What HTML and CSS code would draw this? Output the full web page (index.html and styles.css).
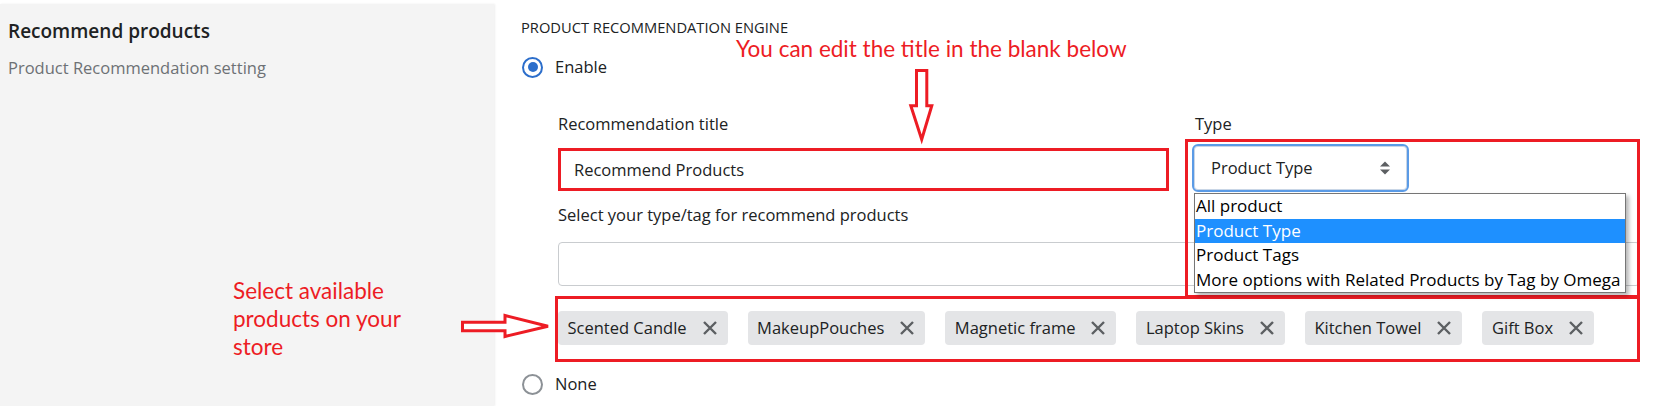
FILE: index.html
```html
<!DOCTYPE html>
<html lang="en">
<head>
    <meta charset="UTF-8">
    <meta name="viewport" content="width=device-width, initial-scale=1.0">
    <title>Recommend products</title>
    <link rel="stylesheet" href="styles.css">
</head>
<body>
    <div class="page">
        <div class="sidebar">
            <h2>Recommend products</h2>
            <p>Product Recommendation setting</p>
        </div>

        <div class="main">
            <h3 class="engine-title">Product recommendation engine</h3>
            <div class="radio-row">
                <span class="radio checked"></span>
                <span>Enable</span>
            </div>

            <div class="form">
                <div class="field-row">
                    <div class="title-field">
                        <div class="label">Recommendation title</div>
                        <div class="text-input">Recommend Products</div>
                    </div>
                    <div class="type-field">
                        <div class="label">Type</div>
                        <div class="type-box">
                            <div class="select">
                                <span>Product Type</span>
                                <svg width="10" height="14" viewBox="0 0 10 14">
                                    <polygon points="0,5.5 5,0.5 10,5.5" fill="#5c5f62"/>
                                    <polygon points="0,8.5 5,13.5 10,8.5" fill="#5c5f62"/>
                                </svg>
                            </div>
                            <ul class="options">
                                <li>All product</li>
                                <li class="active">Product Type</li>
                                <li>Product Tags</li>
                                <li>More options with Related Products by Tag by Omega</li>
                            </ul>
                        </div>
                    </div>
                </div>

                <div class="label tag-label">Select your type/tag for recommend products</div>
                <div class="tag-input"></div>

                <div class="tags-box">
                    <span class="chip">Scented Candle
                        <svg width="16" height="16" viewBox="0 0 16 16"><path d="M2 2L14 14M14 2L2 14"/></svg>
                    </span>
                    <span class="chip">MakeupPouches
                        <svg width="16" height="16" viewBox="0 0 16 16"><path d="M2 2L14 14M14 2L2 14"/></svg>
                    </span>
                    <span class="chip">Magnetic frame
                        <svg width="16" height="16" viewBox="0 0 16 16"><path d="M2 2L14 14M14 2L2 14"/></svg>
                    </span>
                    <span class="chip">Laptop Skins
                        <svg width="16" height="16" viewBox="0 0 16 16"><path d="M2 2L14 14M14 2L2 14"/></svg>
                    </span>
                    <span class="chip">Kitchen Towel
                        <svg width="16" height="16" viewBox="0 0 16 16"><path d="M2 2L14 14M14 2L2 14"/></svg>
                    </span>
                    <span class="chip">Gift Box
                        <svg width="16" height="16" viewBox="0 0 16 16"><path d="M2 2L14 14M14 2L2 14"/></svg>
                    </span>
                </div>
            </div>

            <div class="radio-row none-row">
                <span class="radio"></span>
                <span>None</span>
            </div>
        </div>

        <!-- annotations drawn over the screenshot -->
        <div class="note note-title">You can edit the title in the blank below</div>
        <div class="note note-store">Select available<br>products on your<br>store</div>
        <svg class="arrows" width="1660" height="406" viewBox="0 0 1660 406">
            <polygon points="916.5,70.5 926.8,70.5 926.8,105.8 931.8,105.8 921.7,139.5 910.8,105.8 916.5,105.8"/>
            <polygon points="462.5,322.2 505,322.2 505,315.5 548,326.2 505,336.5 505,330.8 462.5,330.8"/>
        </svg>
    </div>
</body>
</html>
```

FILE: styles.css
```css
* {
    box-sizing: border-box;
}

body {
    margin: 0;
    font-family: "Open Sans", "Noto Sans", sans-serif;
    color: #202223;
    background-color: #fff;
}

.page {
    position: relative;
    display: flex;
    height: 406px;
    padding-top: 4px;
    overflow: hidden;
}

.sidebar {
    width: 494px;
    flex-shrink: 0;
    padding: 15px 8px 0;
    background-color: #f4f4f4;
    box-shadow: 1px 0 2px rgba(0, 0, 0, 0.07);
}

.sidebar h2 {
    margin: 0;
    font-size: 19px;
    line-height: 24px;
    font-weight: 600;
}

.sidebar p {
    margin: 15px 0 0;
    font-size: 16.5px;
    line-height: 20px;
    color: #6d7175;
}

.main {
    flex: 1;
    padding: 13px 0 0 27px;
    font-size: 16.5px;
    line-height: 20px;
}

.engine-title {
    margin: 0;
    font-size: 14.7px;
    line-height: 20px;
    font-weight: 400;
    text-transform: uppercase;
}

.radio-row {
    display: flex;
    align-items: center;
    gap: 12px;
    height: 20px;
    margin-top: 20px;
}

.radio {
    display: flex;
    align-items: center;
    justify-content: center;
    width: 21px;
    height: 21px;
    margin-left: 1px;
    border: 2px solid #8c9196;
    border-radius: 50%;
}

.radio.checked {
    border-color: #2c6ecb;
}

.radio.checked::after {
    content: "";
    width: 10px;
    height: 10px;
    border-radius: 50%;
    background-color: #2c6ecb;
}

.none-row {
    margin-top: 12px;
}

.form {
    margin-top: 37px;
    padding-left: 37px;
}

.field-row {
    display: flex;
    align-items: flex-start;
    gap: 16px;
}

.title-field {
    width: 611px;
}

.text-input {
    display: flex;
    align-items: center;
    height: 43px;
    margin-top: 14px;
    padding: 0 13px;
    border: 3px solid #ed1c24;
}

.type-field {
    width: 455px;
}

.type-field .label {
    padding-left: 10px;
}

.type-box {
    position: relative;
    z-index: 2;
    height: 159px;
    margin-top: 5px;
    margin-bottom: -107px;
    padding: 2px 4px;
    border: 3px solid #ed1c24;
}

.select {
    display: flex;
    align-items: center;
    justify-content: space-between;
    width: 217px;
    height: 48px;
    padding: 0 17px;
    border: 2px solid #5b9be6;
    border-radius: 6px;
    background-color: #fff;
    box-shadow: inset 0 0 0 1px #c9d6e6;
}

.options {
    width: 432px;
    margin: 1px 0 0 2px;
    padding: 0;
    list-style: none;
    border: 1px solid #767676;
    background-color: #fff;
    box-shadow: 3px 3px 4px rgba(0, 0, 0, 0.28);
    font-size: 17px;
    color: #000;
}

.options li {
    height: 24.5px;
    line-height: 24.5px;
    padding-left: 1px;
    white-space: nowrap;
}

.options li.active {
    background-color: #1e90ff;
    color: #fff;
}

.tag-label {
    margin-top: 14px;
}

.tag-input {
    width: 1082px;
    height: 44px;
    margin-top: 17px;
    border: 1px solid #c9cccf;
    border-radius: 4px;
}

.tags-box {
    display: flex;
    align-items: flex-start;
    gap: 20px;
    width: 1085px;
    height: 66px;
    margin: 10px 0 0 -3px;
    padding-top: 12px;
    border: 3px solid #ed1c24;
}

.chip {
    display: flex;
    align-items: center;
    gap: 15px;
    height: 34px;
    padding: 0 10px 0 9.5px;
    border-radius: 4px;
    background-color: #e4e5e7;
    white-space: nowrap;
}

.chip svg path {
    stroke: #5c5f62;
    stroke-width: 2.4;
    fill: none;
}

.note {
    position: absolute;
    font-family: Lato, "Open Sans", sans-serif;
    font-size: 22.5px;
    color: #ed1c24;
}

.note-title {
    left: 736px;
    top: 35px;
    line-height: 1.2;
}

.note-store {
    left: 233px;
    top: 277px;
    line-height: 28px;
}

.arrows {
    position: absolute;
    left: 0;
    top: 0;
    pointer-events: none;
}

.arrows polygon {
    fill: #fff;
    stroke: #ed1c24;
    stroke-width: 3;
}
```
